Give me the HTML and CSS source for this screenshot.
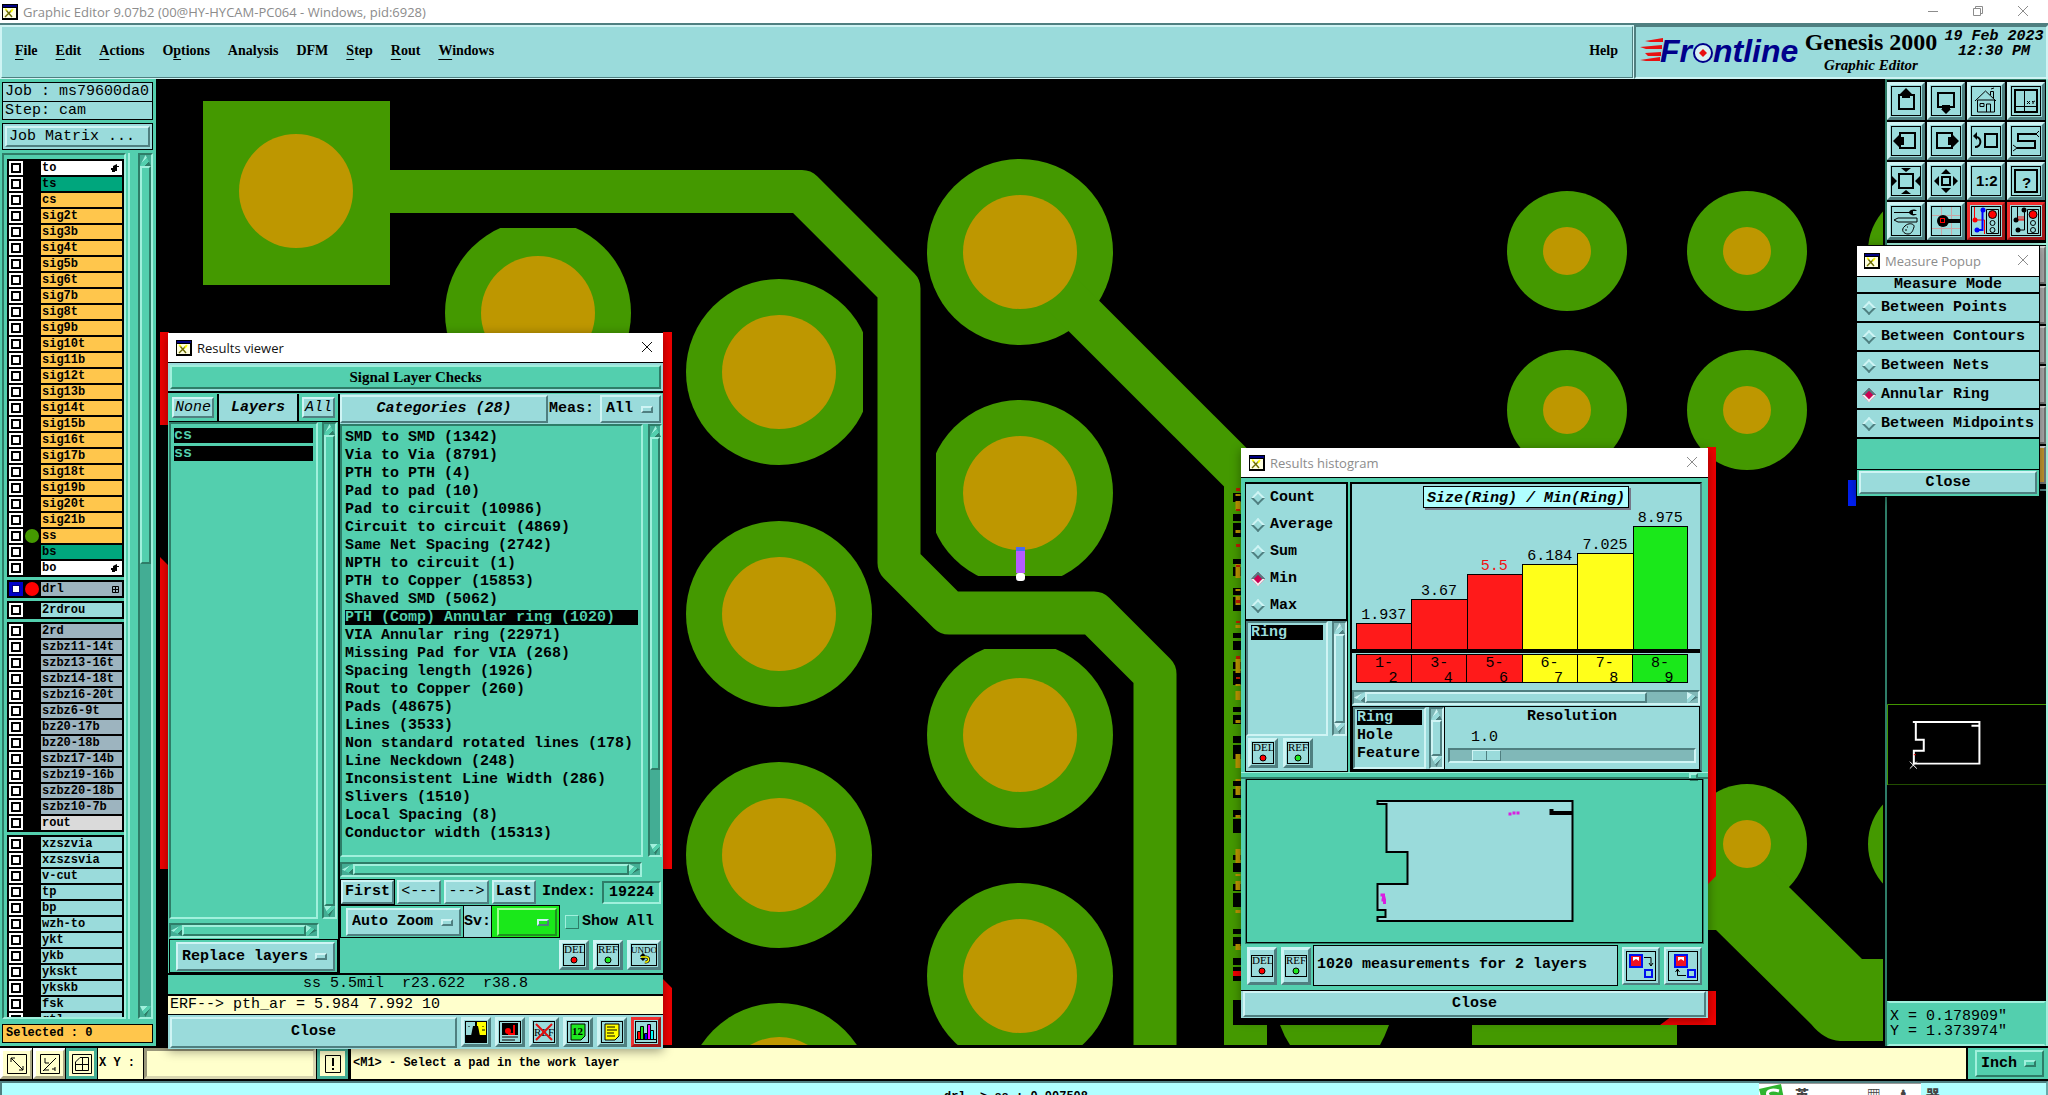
FILE: index.html
```html
<!DOCTYPE html>
<html lang="en">
<head>
<meta charset="utf-8">
<title>Graphic Editor 9.07b2</title>
<link rel="stylesheet" href="styles.css">
</head>
<body>
<svg class="defs" aria-hidden="true">
  <symbol id="app" viewBox="0 0 16 16"><rect width="16" height="16" fill="#000"/><rect x="1" y="1" width="14" height="2" fill="#000080"/><rect x="1" y="4" width="13" height="10" fill="#ffffe0"/><path d="M4 6l6 7M10 6l-7 7" stroke="#6b6b00" stroke-width="1.4"/><path d="M3 5l2 1M11 5l-2 3" stroke="#ff0" stroke-width="1.5"/></symbol>
  <symbol id="x" viewBox="0 0 12 12"><path d="M1 1l10 10M11 1L1 11" stroke="currentColor" fill="none"/></symbol>
  <symbol id="hand" viewBox="0 0 8 8"><path d="M0 4h2V2l4-2v2h2v1H6v4H4v1H1V6H0z"/></symbol>
</svg>

<header class="titlebar">
  <svg class="app"><use href="#app"/></svg>
  <h1>Graphic Editor 9.07b2 (00@HY-HYCAM-PC064 - Windows, pid:6928)</h1>
  <button aria-label="Minimize"><svg viewBox="0 0 12 12"><path d="M1 6.500h10" stroke="currentColor"/></svg></button>
  <button aria-label="Restore"><svg viewBox="0 0 12 12"><path d="M1.500 3.500h7v7h-7zM3.500 3V1.500h7v7H9" fill="none" stroke="currentColor"/></svg></button>
  <button aria-label="Close"><svg><use href="#x"/></svg></button>
</header>

<div class="top">
  <nav class="menu">
    <button><u>F</u>ile</button><button><u>E</u>dit</button><button><u>A</u>ctions</button><button>O<u>p</u>tions</button><button>Analysis</button><button>DFM</button><button><u>S</u>tep</button><button><u>R</u>out</button><button><u>W</u>indows</button>
    <button class="help">Help</button>
  </nav>
  <div class="brand">
    <svg class="logo" viewBox="0 0 160 30"><g fill="#e81010"><path d="M5 4l18-3v4H10zM0 10l22-2v4H6zM5 16l16-1v4H8zM0 23l20-3v4H6z"/></g><text x="20" y="25" class="logotext">Fr</text><text x="73" y="25" class="logotext">ntline</text><circle cx="63" cy="16" r="9" fill="#d8f2f2" stroke="#00008b" stroke-width="2"/><path d="M63 12l4 4-4 4-4-4z" fill="#e81010"/></svg>
    <div class="product"><strong>Genesis 2000</strong><em>Graphic Editor</em></div>
    <div class="clock">19 Feb 2023<br>12:30 PM</div>
  </div>
</div>

<main class="main">
  <aside class="left">
    <div class="job"><div>Job : ms79600da0</div><div>Step: cam</div></div>
    <div class="matrix"><button class="raised">Job Matrix ...</button></div>
    <div class="listwrap">
      <div class="layers">
        <div class="grp">
          <label class="w"><input type="checkbox"><i></i><b>to</b><svg><use href="#hand"/></svg></label>
          <label class="g"><input type="checkbox"><i></i><b>ts</b></label>
          <label class="o"><input type="checkbox"><i></i><b>cs</b></label>
          <label class="o"><input type="checkbox"><i></i><b>sig2t</b></label>
          <label class="o"><input type="checkbox"><i></i><b>sig3b</b></label>
          <label class="o"><input type="checkbox"><i></i><b>sig4t</b></label>
          <label class="o"><input type="checkbox"><i></i><b>sig5b</b></label>
          <label class="o"><input type="checkbox"><i></i><b>sig6t</b></label>
          <label class="o"><input type="checkbox"><i></i><b>sig7b</b></label>
          <label class="o"><input type="checkbox"><i></i><b>sig8t</b></label>
          <label class="o"><input type="checkbox"><i></i><b>sig9b</b></label>
          <label class="o"><input type="checkbox"><i></i><b>sig10t</b></label>
          <label class="o"><input type="checkbox"><i></i><b>sig11b</b></label>
          <label class="o"><input type="checkbox"><i></i><b>sig12t</b></label>
          <label class="o"><input type="checkbox"><i></i><b>sig13b</b></label>
          <label class="o"><input type="checkbox"><i></i><b>sig14t</b></label>
          <label class="o"><input type="checkbox"><i></i><b>sig15b</b></label>
          <label class="o"><input type="checkbox"><i></i><b>sig16t</b></label>
          <label class="o"><input type="checkbox"><i></i><b>sig17b</b></label>
          <label class="o"><input type="checkbox"><i></i><b>sig18t</b></label>
          <label class="o"><input type="checkbox"><i></i><b>sig19b</b></label>
          <label class="o"><input type="checkbox"><i></i><b>sig20t</b></label>
          <label class="o"><input type="checkbox"><i></i><b>sig21b</b></label>
          <label class="o"><input type="checkbox"><i class="green"></i><b>ss</b></label>
          <label class="g"><input type="checkbox"><i></i><b>bs</b></label>
          <label class="w"><input type="checkbox"><i></i><b>bo</b><svg><use href="#hand"/></svg></label>
        </div>
        <div class="grp"><label class="y"><input type="checkbox" checked><i class="red"></i><b>drl</b><svg viewBox="0 0 8 8"><path d="M1.500 1.500h6v6h-6zM4.500 1v7M1 4.500h7" stroke="#000" fill="none"/></svg></label></div>
        <div class="grp"><label class="c"><input type="checkbox"><i></i><b>2rdrou</b></label></div>
        <div class="grp">
          <label class="y"><input type="checkbox"><i></i><b>2rd</b></label>
          <label class="y"><input type="checkbox"><i></i><b>szbz11-14t</b></label>
          <label class="y"><input type="checkbox"><i></i><b>szbz13-16t</b></label>
          <label class="y"><input type="checkbox"><i></i><b>szbz14-18t</b></label>
          <label class="y"><input type="checkbox"><i></i><b>szbz16-20t</b></label>
          <label class="y"><input type="checkbox"><i></i><b>szbz6-9t</b></label>
          <label class="y"><input type="checkbox"><i></i><b>bz20-17b</b></label>
          <label class="y"><input type="checkbox"><i></i><b>bz20-18b</b></label>
          <label class="y"><input type="checkbox"><i></i><b>szbz17-14b</b></label>
          <label class="y"><input type="checkbox"><i></i><b>szbz19-16b</b></label>
          <label class="y"><input type="checkbox"><i></i><b>szbz20-18b</b></label>
          <label class="y"><input type="checkbox"><i></i><b>szbz10-7b</b></label>
          <label class="l"><input type="checkbox"><i></i><b>rout</b></label>
        </div>
        <div class="grp">
          <label class="c"><input type="checkbox"><i></i><b>xzszvia</b></label>
          <label class="c"><input type="checkbox"><i></i><b>xzszsvia</b></label>
          <label class="c"><input type="checkbox"><i></i><b>v-cut</b></label>
          <label class="c"><input type="checkbox"><i></i><b>tp</b></label>
          <label class="c"><input type="checkbox"><i></i><b>bp</b></label>
          <label class="c"><input type="checkbox"><i></i><b>wzh-to</b></label>
          <label class="c"><input type="checkbox"><i></i><b>ykt</b></label>
          <label class="c"><input type="checkbox"><i></i><b>ykb</b></label>
          <label class="c"><input type="checkbox"><i></i><b>ykskt</b></label>
          <label class="c"><input type="checkbox"><i></i><b>ykskb</b></label>
          <label class="c"><input type="checkbox"><i></i><b>fsk</b></label>
          <label class="c"><input type="checkbox"><i></i><b>gtl</b></label>
        </div>
      </div>
      <div class="rail"></div>
      <div class="sb v layerbar"><span class="up"></span><span class="thumb"></span><span class="trough"></span><span class="down"></span></div>
    </div>
    <div class="selected">Selected : 0</div>
  </aside>

  <svg class="canvas" viewBox="156 79 1729 967" preserveAspectRatio="xMinYMin slice">
    <g fill="#449900">
      <rect x="203" y="101" width="187" height="184"/>
      <circle cx="538" cy="313" r="93"/>
      <circle cx="779" cy="372" r="93"/><circle cx="779" cy="614" r="93"/><circle cx="779" cy="855" r="93"/><circle cx="779" cy="1096" r="93"/>
      <circle cx="1020" cy="252" r="93"/><circle cx="1020" cy="493" r="93"/><circle cx="1020" cy="735" r="93"/><circle cx="1020" cy="976" r="93"/>
      <circle cx="1567" cy="251" r="60"/><circle cx="1747" cy="251" r="60"/><circle cx="1928" cy="251" r="60"/>
      <circle cx="1567" cy="410" r="60"/><circle cx="1747" cy="410" r="60"/><circle cx="1747" cy="844" r="60"/><circle cx="1928" cy="844" r="60"/>
      <path d="M1700 860V930H1716L1811 1024Q1824 1040 1840 1041H1883V959H1862L1790 888 1740 840z"/>
      <rect x="1224" y="480" width="9" height="566"/><rect x="1224" y="1025" width="43" height="20"/><rect x="1472" y="1025" width="205" height="20"/>
      <path d="M1280 1025H1389Q1385 1036 1380 1045H1290Q1284 1036 1280 1025z"/>
    </g>
    <g fill="none" stroke="#449900" stroke-width="43" stroke-linejoin="round">
      <path d="M385 191.500H802L899 288.500V563L949 613H1094L1155 674V1045"/>
      <path d="M1020 252L1260 492"/>
    </g>
    <g fill="#000">
      <rect x="440" y="215" width="200" height="13"/><rect x="863" y="300" width="14" height="145"/>
      <rect x="923" y="440" width="13" height="100"/><rect x="970" y="576" width="100" height="14"/><rect x="970" y="638" width="100" height="11"/>
      <rect x="1233" y="490" width="8" height="534"/><rect x="156" y="1045" width="1729" height="4"/><rect x="1883" y="79" width="2" height="967"/>
    </g>
    <g fill="#be9700">
      <circle cx="296" cy="191" r="57"/><circle cx="538" cy="313" r="57"/>
      <circle cx="779" cy="372" r="57"/><circle cx="779" cy="614" r="57"/><circle cx="779" cy="855" r="57"/><path d="M750 1045a57 57 0 0 1 58 0z"/>
      <circle cx="1020" cy="252" r="57"/><circle cx="1020" cy="493" r="57"/><circle cx="1020" cy="735" r="57"/><circle cx="1020" cy="976" r="57"/>
      <circle cx="1567" cy="251" r="24"/><circle cx="1747" cy="251" r="24"/><circle cx="1567" cy="410" r="24"/><circle cx="1747" cy="410" r="24"/><circle cx="1747" cy="844" r="24"/>
    </g>
    <g stroke-width="8" fill="none">
      <path d="M1237 490V1000" stroke="#449900" stroke-dasharray="3 9 12 7 2 14 22 5"/>
      <path d="M1238 494V950" stroke="#be9700" stroke-width="5" stroke-dasharray="2 5 9 20 3 31 14 11"/>
      <path d="M1238 488V700" stroke="#c02000" stroke-width="4" stroke-dasharray="3 18 2 33"/>
      <path d="M1237 971v5" stroke="#f00000"/>
    </g>
    <path fill="#f00000" d="M160 332h9V425h-9zM160 557l9 9V869h-9zM663 332h9V869h-9zM663 979l9 9V1045h-9zM1418 447H1716V876l-9 9V447zM1716 991V1025H1660l12-9h36V991z"/>
    <rect x="1848" y="480" width="8" height="26" fill="#0020f0"/>
    <rect x="1016" y="547" width="9" height="6" fill="#4a6af0"/><rect x="1016" y="551" width="9" height="22" fill="#b45cff"/><rect x="1016" y="573" width="9" height="8" rx="3" fill="#fff"/>
  </svg>

  <aside class="right">
    <div class="tools">
      <button aria-label="Pan up"><svg viewBox="0 0 30 30"><rect class="f" x=".5" y=".5" width="29" height="29"/><path class="s" d="M8 9h15v14H8z"/><path d="M15 2l6 6h-2v4h-8V8H9z"/></svg></button>
      <button aria-label="Pan down"><svg viewBox="0 0 30 30"><rect class="f" x=".5" y=".5" width="29" height="29"/><path class="s" d="M7 7h16v14H7z"/><path d="M15 28l5-5h-1v-4h-8v4h-1z"/></svg></button>
      <button aria-label="Home"><svg viewBox="0 0 30 30"><rect class="f" x=".5" y=".5" width="29" height="29"/><path class="t" d="M4 15L14.500 5 25 15M6.500 14v12h17V14zM9 17.500h4v3H9zM15.500 26v-8h4v8M19.500 9V5.500h3V12M20 3l3-1"/></svg></button>
      <button aria-label="Coordinates"><svg viewBox="0 0 30 30"><rect class="f" x=".5" y=".5" width="29" height="29"/><path class="s" d="M4 4h22v22H4z"/><path class="t" d="M13.500 4v22M4 20.500h22M16 15l3 3m0-3l-3 3M21 15l1 1 2-1m-2 1v2"/></svg></button>
      <button aria-label="Pan left"><svg viewBox="0 0 30 30"><rect class="f" x=".5" y=".5" width="29" height="29"/><path class="s" d="M9 7h15v15H9z"/><path d="M2 15l6-6v2h5v8H8v2z"/></svg></button>
      <button aria-label="Pan right"><svg viewBox="0 0 30 30"><rect class="f" x=".5" y=".5" width="29" height="29"/><path class="s" d="M6 7h15v15H6z"/><path d="M28 15l-6-6v2h-5v8h5v2z"/></svg></button>
      <button aria-label="Previous view"><svg viewBox="0 0 30 30"><rect class="f" x=".5" y=".5" width="29" height="29"/><path class="s" d="M14 8h12v13H14zM4 21c7 0 7-10 1-10"/><path d="M2 10l4-4v8z"/></svg></button>
      <button aria-label="Snake"><svg viewBox="0 0 30 30"><rect class="f" x=".5" y=".5" width="29" height="29"/><path class="s" d="M25 8H7v7h17v7H6"/><path class="t" d="M25 8l3-3m-3 3l3 3M6 22l-4-3m4 3l-4 3"/></svg></button>
      <button aria-label="Zoom in"><svg viewBox="0 0 30 30"><rect class="f" x=".5" y=".5" width="29" height="29"/><path class="s" d="M8 8h14v14H8z"/><path d="M15 6l-5-4h10zM15 24l-5 4h10zM6 15l-5-5v10zM24 15l5-5v10z"/></svg></button>
      <button aria-label="Zoom out"><svg viewBox="0 0 30 30"><rect class="f" x=".5" y=".5" width="29" height="29"/><path class="s" d="M11 11h8v8h-8z"/><path d="M15 3l5 5H10zM15 27l5-5H10zM3 15l5-5v10zM27 15l-5-5v10z"/></svg></button>
      <button aria-label="Scale one to two"><svg viewBox="0 0 30 30"><rect class="f" x=".5" y=".5" width="29" height="29"/><text x="5" y="20" class="big">1:2</text></svg></button>
      <button aria-label="Query"><svg viewBox="0 0 30 30"><rect class="f" x=".5" y=".5" width="29" height="29"/><path class="s" d="M4 4h22v22H4z"/><text x="11" y="22" class="big">?</text></svg></button>
      <button aria-label="Settings"><svg viewBox="0 0 30 30"><rect class="f" x=".5" y=".5" width="29" height="29"/><path d="M3 6h15c2-3 6-3 8-1h-4v3h4c-2 2-6 2-8-1H3z"/><path class="t" d="M3 14l4-2h19v4H7zM14 20c4-4 10-2 9 1s-2 7-6 7-8-4-3-8zM14 24h2m0-3h1"/></svg></button>
      <button aria-label="Highlight net"><svg viewBox="0 0 30 30"><rect class="f" x=".5" y=".5" width="29" height="29"/><path d="M10.500 1v28M20.500 1v28M1 9.500h28M1 22.500h28" stroke="#c9a5a5"/><circle cx="12" cy="15" r="6"/><path d="M15 13h14v4H15z"/><rect x="9.500" y="12.500" width="4" height="4" stroke="#f00" fill="none"/></svg></button>
      <button class="on" aria-label="Net status"><svg viewBox="0 0 30 30"><rect class="f" x=".5" y=".5" width="29" height="29"/><path d="M3.500 1v13h10v14" stroke="#f00" fill="none"/><path d="M11.500 4v20H5" stroke="#00f" stroke-width="2" fill="none"/><circle cx="12" cy="4" r="2.500" fill="#00f"/><circle cx="6" cy="24" r="2.500" fill="#00f"/><circle cx="4" cy="14" r="2.500" fill="#f00"/><path class="t" d="M15.500 3.500h12v24h-12z"/><circle cx="21.500" cy="8.500" r="4" fill="#f00" stroke="#000"/><circle class="t" cx="21.500" cy="17" r="2.500"/><circle class="t" cx="21.500" cy="24" r="2.500"/></svg></button>
      <button class="on" aria-label="Selection status"><svg viewBox="0 0 30 30"><rect class="f" x=".5" y=".5" width="29" height="29"/><path class="t" d="M6.500 1v13M13.500 4v20H7"/><path d="M7 14h6M8 10v4m2-4v4m2-4v4" stroke="#f00"/><circle cx="13" cy="4" r="2.500"/><circle cx="7" cy="24" r="2.500"/><circle cx="5" cy="14" r="2.500"/><path class="t" d="M16.500 3.500h11v24h-11z"/><circle cx="22" cy="8.500" r="4" fill="#f00" stroke="#000"/><circle class="t" cx="22" cy="17" r="2.500"/><circle class="t" cx="22" cy="24" r="2.500"/></svg></button>
    </div>
    <div class="more"><span></span><span></span><span></span><span></span><span></span><span class="amber"></span></div>
    <div class="overview">
      <svg viewBox="0 0 160 82"><path d="M161 .5H.5v81H161" fill="none" stroke="#449900"/><path d="M26 18h67v42H27V47h10V36h-8V18M85 22h8" fill="none" stroke="#fff" stroke-width="2"/><path d="M23 58l7 7m0-7l-7 7" stroke="#fff"/><path d="M27 51h2" stroke="#f00"/></svg>
    </div>
    <div class="coords">X = 0.178909"<br>Y = 1.373974"</div>
  </aside>
</main>

<footer class="cmd">
  <button aria-label="Diagonal snap"><svg viewBox="0 0 20 20"><path class="t" d="M.5 .5h19v19H.5zM4 4l12 12M4 8V4h4M16 12v4h-4"/></svg></button>
  <button aria-label="Angle snap"><svg viewBox="0 0 20 20"><path class="t" d="M.5 .5h19v19H.5zM4 16h5M3 17L16 4M5 4v5h4M12 15h3m0-2v4"/></svg></button>
  <button class="teal" aria-label="Grid"><svg viewBox="0 0 20 20"><path class="t" d="M.5 .5h19v19H.5zM8 3.500h8.500v13h-13V8zM10.500 3v13M3 10.500h14"/></svg></button>
  <label for="xy">X Y :</label>
  <input id="xy" type="text">
  <button class="teal" aria-label="Alert"><svg viewBox="0 0 20 20"><path class="t" d="M2.500 1.500h15v17h-15z"/><path class="s" d="M10 4v8M10 14v2"/></svg></button>
  <p>&lt;M1&gt; - Select a pad in the work layer</p>
  <div class="unit"><div class="raised dd tealbtn"><select aria-label="Unit"><option>Inch</option><option>mm</option></select><i class="dash"></i></div></div>
</footer>
<div class="status"><span>drl -&gt; ss : 0.007508</span>
  <div class="ime"><svg viewBox="0 0 26 20"><path d="M0 5L22 0l4 20H4z" fill="#2fb52f"/><path d="M20 7C10 4 6 9 10 12s10 2 10 8" fill="none" stroke="#fff" stroke-width="3"/></svg><b>英</b><b>,</b><b>,</b><b>▦</b><b>♟</b><b>器</b></div>
</div>

<section class="win viewer">
  <div class="wtitle active"><svg class="app"><use href="#app"/></svg><h2>Results viewer</h2><button aria-label="Close"><svg><use href="#x"/></svg></button></div>
  <div class="banner"><h3>Signal Layer Checks</h3></div>
  <div class="cols">
    <div class="colA">
      <div class="tabs"><button class="raised thin">None</button><strong>Layers</strong><button class="raised thin">All</button></div>
      <div class="scroll">
        <ul class="list short"><li class="sel">cs</li><li class="sel">ss</li></ul>
        <div class="sb v"><span class="up"></span><span class="thumb"></span><span class="down"></span></div>
      </div>
      <div class="sb h"><span class="lt"></span><span class="thumb"></span><span class="rt"></span></div>
      <div class="replace"><div class="raised dd"><select aria-label="Layer mode"><option>Replace layers</option><option>Add layers</option></select><i class="dash"></i></div></div>
    </div>
    <div class="colB">
      <div class="cathead"><button class="raised cat">Categories (28)</button><label for="meas">Meas:</label><div class="raised dd meas"><select id="meas"><option>All</option></select><i class="dash"></i></div></div>
      <div class="scroll">
        <ul class="list">
          <li>SMD to SMD (1342)</li><li>Via to Via (8791)</li><li>PTH to PTH (4)</li><li>Pad to pad (10)</li><li>Pad to circuit (10986)</li><li>Circuit to circuit (4869)</li><li>Same Net Spacing (2742)</li><li>NPTH to circuit (1)</li><li>PTH to Copper (15853)</li><li>Shaved SMD (5062)</li><li class="sel">PTH (Comp) Annular ring (1020)</li><li>VIA Annular ring (22971)</li><li>Missing Pad for VIA (268)</li><li>Spacing length (1926)</li><li>Rout to Copper (260)</li><li>Pads (48675)</li><li>Lines (3533)</li><li>Non standard rotated lines (178)</li><li>Line Neckdown (248)</li><li>Inconsistent Line Width (286)</li><li>Slivers (1510)</li><li>Local Spacing (8)</li><li>Conductor width (15313)</li>
        </ul>
        <div class="sb v catbar"><span class="up"></span><span class="thumb"></span><span class="trough"></span><span class="down"></span></div>
      </div>
      <div class="sb h"><span class="lt"></span><span class="thumb"></span><span class="rt"></span></div>
      <div class="nav"><button class="raised first">First</button><button class="raised light">&lt;---</button><button class="raised light">---&gt;</button><button class="raised">Last</button><label for="idx">Index:</label><input id="idx" type="text" value="19224"></div>
      <div class="opts"><div class="auto"><div class="raised dd"><select aria-label="Zoom mode"><option>Auto Zoom</option><option>No Zoom</option></select><i class="dash"></i></div></div><label class="sv" for="sv">Sv:</label><div class="svbox"><div class="raised dd"><select id="sv"><option></option></select><i class="dash"></i></div></div><label class="show"><input type="checkbox">Show All</label></div>
      <div class="acts">
        <button class="raised ic" aria-label="Delete"><svg viewBox="0 0 22 22"><rect x=".5" y=".5" width="21" height="21" fill="none" stroke="#000"/><text x="1" y="9" class="cap">DEL</text><circle cx="11" cy="16" r="3" fill="#f00" stroke="#000"/></svg></button>
        <button class="raised ic" aria-label="Reference"><svg viewBox="0 0 22 22"><rect x=".5" y=".5" width="21" height="21" fill="none" stroke="#000"/><text x="1" y="9" class="cap">REF</text><circle cx="11" cy="16" r="3" fill="#1fe81f" stroke="#000"/></svg></button>
        <button class="raised ic wide" aria-label="Undo"><svg viewBox="0 0 26 22"><rect x=".5" y=".5" width="25" height="21" fill="none" stroke="#000"/><text x="0" y="9" class="cap sm">UNDO</text><path d="M10 13h5c4 0 3 6-1 5M10 13l3-3M10 13l3 3" fill="none" stroke="#000" stroke-width="3"/><path d="M10 13h5c4 0 3 6-1 5" fill="none" stroke="#ff0" stroke-width="1.5"/></svg></button>
      </div>
    </div>
  </div>
  <div class="info">ss 5.5mil&nbsp; r23.622&nbsp; r38.8</div>
  <div class="erf">ERF--&gt; pth_ar = 5.984 7.992 10</div>
  <div class="closebar"><button class="raised close">Close</button>
    <button class="raised ic" aria-label="Compare"><svg viewBox="0 0 22 22"><rect width="22" height="22"/><rect x="1" y="1" width="9" height="13" fill="#9adbdb"/><rect x="12" y="1" width="9" height="13" fill="#ff0"/><path d="M8 5h5l2 10H6z"/><path d="M4 5v1M18 5v1M17 9h3" stroke="#000"/></svg></button>
    <button class="raised ic" aria-label="Snapshot"><svg viewBox="0 0 22 22"><rect class="f" x=".5" y=".5" width="21" height="21"/><rect x="3" y="2" width="16" height="12"/><circle cx="9" cy="10" r="3" fill="#f00"/><path d="M15 4v10M9 13h6" stroke="#f00" stroke-width="2"/><path d="M3 16h16M3 19h13" stroke="#000"/></svg></button>
    <button class="raised ic" aria-label="Clear reference"><svg viewBox="0 0 22 22"><rect class="f" x=".5" y=".5" width="21" height="21"/><text x="1" y="15" class="cap">REF</text><path d="M3 3l16 16M19 3L3 19" stroke="#e01010" stroke-width="2"/></svg></button>
    <button class="raised ic" aria-label="Renumber"><svg viewBox="0 0 22 22"><rect class="f" x=".5" y=".5" width="21" height="21"/><path d="M4 3h14v12l-4 4H4z" fill="#1fe81f" stroke="#000"/><text x="5" y="14" class="cap num">12</text></svg></button>
    <button class="raised ic" aria-label="Notes"><svg viewBox="0 0 22 22"><rect class="f" x=".5" y=".5" width="21" height="21"/><path d="M4 3h14v12l-4 4H4z" fill="#ff0" stroke="#000"/><path d="M6 6h8M6 9h10M6 12h7M6 15h8" stroke="#000"/></svg></button>
    <button class="raised ic on" aria-label="Histogram"><svg viewBox="0 0 22 22"><rect class="f" x=".5" y=".5" width="21" height="21"/><g stroke="#000"><path d="M2.500 10.500h3v8h-3z" fill="#f00"/><path d="M5.500 5.500h3v13h-3z" fill="#1fe81f"/><path d="M9.500 12.500h3v6h-3z" fill="#00f"/><path d="M12.500 3.500h3v15h-3z" fill="#f0f"/><path d="M15.500 9.500h3v9h-3z" fill="#0ff"/><path d="M1 18.500h20"/></g></svg></button>
  </div>
</section>

<section class="win histo">
  <div class="wtitle"><svg class="app"><use href="#app"/></svg><h2>Results histogram</h2><button aria-label="Close"><svg><use href="#x"/></svg></button></div>
  <div class="hbody">
    <div class="hleft">
      <div class="radios">
        <label><input type="radio" name="stat">Count</label><label><input type="radio" name="stat">Average</label><label><input type="radio" name="stat">Sum</label><label><input type="radio" name="stat" checked>Min</label><label><input type="radio" name="stat">Max</label>
      </div>
      <div class="scroll">
        <ul class="list"><li class="sel">Ring</li></ul>
        <div class="sb v"><span class="up"></span><span class="thumb"></span><span class="down"></span></div>
      </div>
      <div class="acts">
        <button class="raised ic" aria-label="Delete"><svg viewBox="0 0 22 22"><rect x=".5" y=".5" width="21" height="21" fill="none" stroke="#000"/><text x="1" y="9" class="cap">DEL</text><circle cx="11" cy="16" r="3" fill="#f00" stroke="#000"/></svg></button>
        <button class="raised ic" aria-label="Reference"><svg viewBox="0 0 22 22"><rect x=".5" y=".5" width="21" height="21" fill="none" stroke="#000"/><text x="1" y="9" class="cap">REF</text><circle cx="11" cy="16" r="3" fill="#1fe81f" stroke="#000"/></svg></button>
      </div>
    </div>
    <div class="hright">
      <h3 class="ctitle">Size(Ring) / Min(Ring)</h3>
      <div class="bars">
        <div><span>1.937</span><i class="r" style="height:26px"></i></div><div><span>3.67</span><i class="r" style="height:50px"></i></div><div><span class="hot">5.5</span><i class="r" style="height:75px"></i></div><div><span>6.184</span><i class="yl" style="height:85px"></i></div><div><span>7.025</span><i class="yl" style="height:96px"></i></div><div><span>8.975</span><i class="gr" style="height:123px"></i></div>
      </div>
      <div class="axis"><span class="r">1-<br>&nbsp; 2</span><span class="r">3-<br>&nbsp; 4</span><span class="r">5-<br>&nbsp; 6</span><span class="yl">6-<br>&nbsp; 7</span><span class="yl">7-<br>&nbsp; 8</span><span class="gr">8-<br>&nbsp; 9</span></div>
      <div class="sb h chartbar"><span class="lt"></span><span class="thumb"></span><span class="trough"></span><span class="rt"></span></div>
      <div class="hbot">
        <ul class="list"><li class="sel">Ring</li><li>Hole</li><li>Feature</li></ul>
        <div class="sb v"><span class="up"></span><span class="thumb"></span><span class="down"></span></div>
        <div class="res"><label for="res">Resolution</label><output>1.0</output><input id="res" type="range" min="0" max="10" value="1"></div>
      </div>
    </div>
  </div>
  <div class="sash"><i></i></div>
  <div class="map"><svg viewBox="0 0 454 162"><path d="M130 21H325V141H130V137H138V130H130V104H160V72H139V24H130z" fill="#9adbdb" stroke="#000" stroke-width="2"/><path d="M325 33H304V29" fill="none" stroke="#000" stroke-width="4"/><path d="M261 34h3m1-1h3m1 0h3M133 115h3v3h2m-4 2h3v4" stroke="#d81fe0" stroke-width="3" fill="none"/></svg></div>
  <div class="hfoot">
    <button class="raised ic" aria-label="Delete"><svg viewBox="0 0 22 22"><rect x=".5" y=".5" width="21" height="21" fill="none" stroke="#000"/><text x="1" y="9" class="cap">DEL</text><circle cx="11" cy="16" r="3" fill="#f00" stroke="#000"/></svg></button>
    <button class="raised ic" aria-label="Reference"><svg viewBox="0 0 22 22"><rect x=".5" y=".5" width="21" height="21" fill="none" stroke="#000"/><text x="1" y="9" class="cap">REF</text><circle cx="11" cy="16" r="3" fill="#1fe81f" stroke="#000"/></svg></button>
    <p>1020 measurements for 2 layers</p>
    <button class="raised ic sq" aria-label="Copy to"><svg viewBox="0 0 30 30"><rect class="f" x=".5" y=".5" width="29" height="29"/><rect x="4" y="4" width="12" height="12" fill="#f01020" stroke="#0010f0" stroke-width="2"/><path d="M7 6v4l3-2 3 2V6z" fill="#fff"/><path class="t" d="M18 6.500h7V15m-2-3l2 3 2-3"/><rect x="19" y="19" width="7" height="7" fill="none" stroke="#0010f0" stroke-width="2"/></svg></button>
    <button class="raised ic sq" aria-label="Copy from"><svg viewBox="0 0 30 30"><rect class="f" x=".5" y=".5" width="29" height="29"/><rect x="7" y="4" width="12" height="12" fill="#f01020" stroke="#0010f0" stroke-width="2"/><path d="M10 6v4l3-2 3 2V6z" fill="#fff"/><path class="t" d="M18 24.500H9.500V18m-2 3l2-3 2 3"/><rect x="20" y="19" width="7" height="7" fill="none" stroke="#0010f0" stroke-width="2"/></svg></button>
  </div>
  <div class="closebar"><button class="raised close">Close</button></div>
</section>

<section class="win measure">
  <div class="wtitle"><svg class="app"><use href="#app"/></svg><h2>Measure Popup</h2><button aria-label="Close"><svg><use href="#x"/></svg></button></div>
  <h3>Measure Mode</h3>
  <div class="modes">
    <label><input type="radio" name="mode">Between Points</label><label><input type="radio" name="mode">Between Contours</label><label><input type="radio" name="mode">Between Nets</label><label><input type="radio" name="mode" checked>Annular Ring</label><label><input type="radio" name="mode">Between Midpoints</label>
  </div>
  <div class="mclose"><button class="raised">Close</button></div>
</section>
</body>
</html>
```
FILE: styles.css
```css
:root {
  --panel: #9adbdb;
  --lite: #cff4f4;
  --dark: #4f7f80;
  --teal: #53cfae;
  --tlite: #a0f0dc;
  --tdark: #2e7d68;
  --trough: #43ad94;
  --cream: #ffffcc;
  --red: #ff1a1a;
  --yellow: #ffff1a;
  --green: #1ae81a;
}
* { box-sizing: border-box; }
body {
  margin: 0;
  height: 100vh;
  overflow: hidden;
  display: flex;
  flex-direction: column;
  background: #000;
  color: #000;
  font: bold 15px/18px "Liberation Mono", monospace;
}
h1, h2, h3, p, ul { margin: 0; padding: 0; font: inherit; }
ul { list-style: none; }
button, input, select { font: inherit; color: inherit; margin: 0; padding: 0; border-radius: 0; }
button { border: 0; background: none; white-space: nowrap; }
.defs { position: absolute; width: 0; height: 0; }
.f, .t { fill: none; stroke: #000; }
.s { fill: none; stroke: #000; stroke-width: 2; }
.cap { font: 11px "Liberation Serif", serif; }
.cap.sm { font-size: 9px; }
.cap.num { font-weight: bold; }
.big { font: bold 15px "Liberation Sans", sans-serif; }
.app { width: 16px; height: 16px; flex: none; }

.raised {
  background: var(--panel);
  border: 3px solid;
  border-color: var(--lite) var(--dark) var(--dark) var(--lite);
}
.dash {
  display: inline-block;
  flex: none;
  width: 12px;
  height: 7px;
  border: 2px solid;
  border-color: var(--lite) var(--dark) var(--dark) var(--lite);
}
.dd { display: flex; align-items: center; padding: 0 6px 0 4px; border-width: 2px; }
.dd select { appearance: none; flex: 1; min-width: 0; border: 0; background: none; }

/* title bar */
.titlebar { display: flex; align-items: center; height: 23px; flex: none; background: #fff; color: #8c8c8c; padding-left: 2px; font: 13px/20px "Open Sans", sans-serif; }
.titlebar h1 { flex: 1; padding-left: 5px; }
.titlebar button { width: 45px; height: 20px; }
.titlebar button:last-child { margin-right: 3px; }
.titlebar button svg { width: 12px; height: 12px; }

.top { display: flex; height: 56px; flex: none; border-top: 2px solid var(--dark); }
.menu { flex: 1; display: flex; align-items: center; gap: 18px; padding: 0 14px 2px 13px; background: var(--panel); border: 2px solid; border-color: var(--lite) var(--dark) var(--dark) var(--lite); outline: 1px solid var(--lite); outline-offset: -1px; font: bold 14px/18px "Liberation Serif", serif; }
.menu u { text-underline-offset: 4px; }
.menu .help { margin-left: auto; }
.brand { width: 414px; display: flex; padding: 2px 0 0 4px; background: var(--panel); border: 2px solid; border-color: var(--dark) var(--lite) var(--lite) var(--dark); }
.logo { width: 160px; height: 30px; margin-top: 8px; flex: none; }
.logotext { font: italic bold 32px "Liberation Sans", sans-serif; fill: #00008b; }
.product { width: 142px; text-align: center; font-family: "Liberation Serif", serif; }
.product strong { display: block; font-size: 24px; line-height: 26px; }
.product em { font-size: 15px; line-height: 20px; }
.clock { flex: 1; text-align: center; font-style: italic; line-height: 15px; white-space: nowrap; }

.main { flex: 1; min-height: 0; display: flex; }

/* left column */
.left { width: 156px; flex: none; display: flex; flex-direction: column; background: var(--teal); padding: 3px 3px 3px 2px; }
.job, .matrix { border: 1px solid #000; background: var(--panel); font-weight: normal; }
.job div { padding: 0 2px; height: 18px; white-space: nowrap; }
.job div + div { border-top: 1px solid #000; }
.matrix { margin-top: 3px; padding: 2px; height: 27px; }
.matrix button { width: 100%; height: 21px; line-height: 15px; text-align: left; border-width: 2px; padding-left: 2px; }
.listwrap { flex: 1; min-height: 0; display: flex; margin-top: 3px; }
.layers { width: 124px; overflow: hidden; border: 2px solid; border-color: var(--tdark) var(--tlite) var(--tlite) var(--tdark); padding: 4px 0 0 3px; font: bold 12px/14px "Liberation Mono", monospace; }
.rail { width: 4px; border-right: 2px solid var(--tlite); margin-right: 8px; }
.grp { width: 117px; background: #000; padding: 1px 2px; margin-bottom: 3px; }
.grp label { display: flex; align-items: center; height: 16px; }
.grp input { appearance: none; width: 14px; height: 14px; background: #fff; box-shadow: inset 0 0 0 2px #fff, inset 0 0 0 4px #000; }
.grp input:checked { box-shadow: inset 0 0 0 3px #0000c8, inset 0 0 0 4px #000080; }
.grp i { width: 18px; height: 16px; flex: none; }
.grp i.green, .grp i.red { width: 14px; height: 14px; margin: 0 2px; border-radius: 50%; background: #449900; }
.grp i.red { background: #f00; }
.grp b { flex: 1; height: 14px; padding-left: 1px; background: var(--row); }
.grp svg { width: 11px; height: 14px; padding: 3px 3px 3px 0; background: var(--row); }
.w { --row: #fff; } .g { --row: #00a67d; } .o { --row: #ffc64c; } .y { --row: #9db4bf; } .c { --row: #9adbdb; } .l { --row: #dadada; }
.selected { margin-top: 5px; height: 19px; border: 1px solid #000; background: #ffc64c; font: bold 12px/17px "Liberation Mono", monospace; padding-left: 3px; }

/* scroll bars */
.sb { display: flex; background: var(--trough); border: 2px solid; border-color: var(--tdark) var(--tlite) var(--tlite) var(--tdark); flex: none; }
.sb.v { width: 15px; flex-direction: column; }
.sb.h { height: 15px; }
.sb .thumb { flex: 1; background: var(--teal); border: 2px solid; border-color: var(--tlite) var(--tdark) var(--tdark) var(--tlite); }
.up, .down, .lt, .rt { flex: none; width: 11px; height: 11px; }
.up { clip-path: polygon(50% 0, 100% 100%, 0 100%); }
.down { clip-path: polygon(50% 100%, 100% 0, 0 0); }
.lt { clip-path: polygon(0 50%, 100% 0, 100% 100%); }
.rt { clip-path: polygon(100% 50%, 0 0, 0 100%); }
.up, .lt { background: linear-gradient(135deg, var(--tlite) 45%, var(--teal) 45% 70%, var(--tdark) 70%); }
.down, .rt { background: linear-gradient(135deg, var(--tlite) 35%, var(--teal) 35% 55%, var(--tdark) 55%); }
.layerbar .thumb { flex: 396; } .layerbar .trough { flex: 444; }
.catbar .thumb { flex: 328; } .catbar .trough { flex: 74; }
.chartbar .thumb { flex: 281; } .chartbar .trough { flex: 41; }

.canvas { flex: 1; min-width: 0; height: 100%; }

/* right column */
.right { width: 163px; flex: none; display: flex; flex-direction: column; border-left: 2px solid var(--tdark); border-right: 2px solid var(--tlite); }
.tools { display: grid; grid-template-columns: repeat(4, 38px); gap: 2px; padding: 2px 0 3px; border-bottom: 2px solid var(--tlite); border-top: 1px solid var(--tdark); }
.tools button, .cmd > button { height: 38px; background: var(--panel); border: 3px solid; border-color: var(--lite) var(--dark) var(--dark) var(--lite); display: grid; place-items: center; }
.tools button.on, .raised.on { border-color: #f03030 #a01818 #a01818 #f03030; }
.tools svg { width: 30px; height: 30px; }
.more { display: grid; grid-template-columns: 38px; grid-auto-rows: 38px; gap: 2px; justify-content: end; height: 246px; padding: 1px 0; border-bottom: 2px solid var(--dark); }
.more span { background: #b0b0b0; border: 2px solid; border-color: #ddd #777 #777 #ddd; }
.more .amber { background: #c89a30; }
.overview { flex: 1; padding-top: 213px; }
.overview svg { display: block; width: 100%; }
.coords { height: 45px; background: var(--teal); border: 2px solid; border-color: var(--tlite) var(--teal) var(--tlite) var(--teal); padding: 6px 1px; line-height: 15px; font-weight: normal; }

/* command line */
.cmd { display: flex; height: 35px; flex: none; background: var(--cream); border-top: 2px solid #000; border-bottom: 2px solid #000; font: bold 12px/31px "Liberation Mono", monospace; }
.cmd > button { width: 33px; height: 31px; background: var(--cream); border-color: #fff #aaa884 #aaa884 #fff; outline: 1px solid #000; flex: none; }
.cmd > button.teal { width: 31px; border-color: var(--trough); }
.cmd svg { width: 20px; height: 20px; }
.cmd label { width: 47px; padding-left: 2px; white-space: pre; }
.cmd input { width: 172px; border: 3px solid; border-color: #99977a #d8d6b0 #d8d6b0 #99977a; background: var(--cream); outline: 1px solid #000; margin-right: 1px; }
.cmd p { flex: 1; border-left: 2px solid #000; margin-left: 1px; padding-left: 2px; }
.unit { width: 82px; background: var(--teal); border-left: 2px solid #000; padding: 2px 4px 2px 7px; }
.tealbtn { height: 27px; line-height: 20px; background: var(--teal); border-color: var(--tlite) var(--tdark) var(--tdark) var(--tlite); font-size: 15px; }
.tealbtn .dash { border-color: var(--tlite) var(--tdark) var(--tdark) var(--tlite); }
.status { height: 14px; flex: none; overflow: hidden; display: flex; background: #b0ffff; border: 2px solid; border-color: var(--dark) #6aa #6aa var(--dark); border-bottom: 0; text-align: center; position: relative; font: bold 12px/14px "Liberation Mono", monospace; }
.status > span { flex: 1; padding-top: 7px; padding-right: 16px; }
.ime { position: absolute; right: 125px; top: 0; width: 162px; display: flex; gap: 16px; border-top: 1px solid #999; background: #fff; font: bold 14px/20px "Noto Sans CJK SC", sans-serif; color: #444; }
.ime svg { width: 26px; height: 20px; flex: none; margin-right: -6px; }

/* floating windows */
.win { position: absolute; display: flex; flex-direction: column; background: var(--teal); box-shadow: 0 2px 10px rgba(0, 0, 0, .4); }
.wtitle { display: flex; align-items: center; height: 30px; flex: none; background: #fff; color: #8c8c8c; padding: 0 8px; font: 13px/20px "Open Sans", sans-serif; border-bottom: 1px solid #000; }
.wtitle.active { color: #111; }
.wtitle h2 { flex: 1; padding-left: 5px; }
.wtitle button { width: 16px; height: 20px; }
.wtitle button svg { width: 12px; height: 12px; }
.ic { width: 30px; height: 30px; display: grid; place-items: center; flex: none; }
.ic svg { width: 22px; height: 22px; }
.ic.wide { width: 34px; }
.ic.wide svg { width: 26px; }
.scroll { display: flex; flex: 1; min-height: 0; }
.list { flex: 1; border: 2px solid; border-color: var(--tdark) var(--tlite) var(--tlite) var(--tdark); }
.list li { height: 15px; line-height: 15px; margin-bottom: 3px; white-space: nowrap; }
.list .sel { background: #000; color: var(--teal); }
.closebar { display: flex; background: var(--panel); border-top: 1px solid #000; flex: none; }

.viewer { left: 168px; top: 333px; width: 495px; height: 716px; }
.banner { height: 30px; flex: none; padding: 2px; background: var(--panel); border-bottom: 2px solid #000; text-align: center; }
.banner h3 { height: 24px; font: bold 15px/20px "Liberation Serif", serif; background: var(--teal); border: 2px solid; border-color: var(--tlite) var(--tdark) var(--tdark) var(--tlite); }
.cols { flex: 1; min-height: 0; display: flex; padding: 1px 1px 0; }
.colA { width: 171px; display: flex; flex-direction: column; border-right: 2px solid #000; }
.tabs { display: flex; height: 28px; flex: none; border-bottom: 1px solid #000; font-style: italic; }
.tabs strong { flex: 1; line-height: 28px; text-align: center; background: var(--panel); border: solid #000; border-width: 0 2px; }
.tabs button { margin: 3px; padding: 0 1px; border-width: 2px; font-style: italic; font-weight: normal; }
.short li { margin-right: 3px; }
.colA .list, .colB .list { padding: 4px 3px 0; }
.colA .list { margin-right: 4px; padding-right: 0; }
.colB .list { margin-right: 5px; }
.colA .sb.v { margin-right: 1px; }
.colB .sb.v { width: 14px; }
.colA .sb.h { margin: 4px 19px 1px 0; }
.colB .sb.h { margin: 5px 20px 2px 0; }
.replace { height: 34px; flex: none; border: 1px solid #000; padding: 2px 2px 2px 6px; }
.replace .dd { height: 29px; }
.colB { flex: 1; display: flex; flex-direction: column; }
.cathead { display: flex; height: 30px; flex: none; background: var(--panel); align-items: center; }
.cat { width: 208px; height: 28px; border-width: 2px; font-style: italic; }
.cathead label { flex: 1; padding-left: 1px; }
.meas { width: 61px; height: 28px; margin-right: 1px; }
.nav { display: flex; gap: 3px; height: 26px; flex: none; align-items: center; padding: 0 1px; }
.nav button { height: 24px; line-height: 18px; border-width: 2px; padding: 0 2px; flex: 1; }
.nav .light { font-weight: normal; }
.nav .first { outline: 1px solid #000; flex: 1 0 8px; }
.nav label { padding: 0 3px; }
.nav input { width: 59px; height: 23px; background: var(--teal); border: 2px solid; border-color: var(--tdark) var(--tlite) var(--tlite) var(--tdark); padding-left: 5px; }
.opts { display: flex; height: 33px; flex: none; align-items: center; }
.auto, .svbox { border: 1px solid #000; height: 33px; padding: 2px 2px 2px 5px; }
.auto { width: 124px; }
.auto .dd, .svbox .dd { height: 28px; }
.sv { background: var(--panel); height: 31px; line-height: 31px; border: solid #000; border-width: 1px 0; box-sizing: content-box; }
.svbox { width: 69px; background: var(--green); }
.svbox .dd { background: var(--green); border-color: #a0ff90 #1f9020 #1f9020 #a0ff90; }
.show { display: flex; align-items: center; padding-left: 5px; gap: 3px; white-space: nowrap; }
.show input { appearance: none; width: 14px; height: 14px; border: 1px solid; border-color: var(--tlite) var(--tdark) var(--tdark) var(--tlite); }
.acts { display: flex; justify-content: flex-end; gap: 4px; padding: 2px 1px; height: 35px; flex: none; }
.info, .erf { flex: none; border-top: 2px solid #000; font-weight: normal; }
.info { height: 21px; text-align: center; }
.erf { height: 20px; background: var(--cream); padding-left: 2px; }
.viewer .closebar { height: 35px; padding: 1px 2px; gap: 4px; align-items: center; }
.viewer .close { height: 31px; flex: 1; border-width: 2px; }

.histo { left: 1241px; top: 448px; width: 467px; height: 570px; }
.hbody, .histo .closebar { --teal: #9adbdb; --tlite: #cff4f4; --tdark: #4f7f80; --trough: #80b8b8; }
.hbody { display: flex; padding: 4px 6px 0 4px; height: 294px; flex: none; }
.hleft { width: 103px; background: var(--panel); border: 1px solid #000; display: flex; flex-direction: column; margin-right: 2px; }
.radios { height: 138px; border-bottom: 2px solid #000; padding: 0 5px; border-top: 1px solid #000; border-right: 1px solid #000; }
.radios label { display: flex; height: 27px; align-items: center; gap: 5px; }
.radios input, .modes input { appearance: none; width: 10px; height: 10px; margin: 0 2px; transform: rotate(45deg); border: 2px solid; border-color: var(--lite) var(--dark) var(--dark) var(--lite); }
.radios input:checked, .modes input:checked { background: #cc0052; border-color: var(--dark) #eee #eee var(--dark); }
.hleft .list { padding: 2px 3px; margin-right: 4px; }
.hleft .acts { justify-content: flex-start; padding: 2px; gap: 5px; }
.hright { flex: 1; min-width: 0; background: var(--panel); border: 2px solid; border-color: #000 var(--dark) #000 #000; display: flex; flex-direction: column; }
.ctitle { align-self: center; margin-top: 2px; height: 22px; padding: 4px 3px 0; line-height: 16px; border: 1px solid #000; background: #b0ffff; box-shadow: 2px 2px 0 #778; font-style: italic; }
.bars { display: flex; height: 145px; flex: none; align-items: flex-end; padding: 0 12px 0 4px; border-bottom: 4px solid #000; font-weight: normal; }
.bars div { flex: 1; text-align: center; display: flex; flex-direction: column; }
.bars span { line-height: 14px; }
.bars .hot { color: #f01010; }
.bars i { border: 1px solid #000; border-width: 1px 0 0 1px; }
.bars div:last-child i { border-right-width: 1px; }
.r { background: var(--red); } .yl { background: var(--yellow); } .gr { background: var(--green); }
.axis { display: flex; margin: 1px 12px 0 4px; height: 29px; flex: none; font-weight: normal; }
.axis span { flex: 1; text-align: center; border: 1px solid #000; border-right-width: 0; line-height: 15px; padding-top: 1px; }
.axis span:last-child { border-right-width: 1px; }
.chartbar { margin: 7px 0 1px; }
.hbot { flex: 1; display: flex; min-height: 0; border: 1px solid #000; }
.hbot .list { flex: none; width: 73px; padding: 1px 2px; margin-right: 3px; }
.hbot li:last-child { margin-bottom: 0; }
.res { flex: 1; border-left: 1px solid #000; padding: 0 3px; display: flex; flex-direction: column; text-align: center; }
.res label { line-height: 20px; }
.res output { text-align: left; padding: 2px 0 1px 23px; font-weight: normal; }
.res input { appearance: none; width: 100%; height: 15px; background: #80b8b8; border: 2px solid; border-color: var(--dark) var(--lite) var(--lite) var(--dark); }
.res input::-webkit-slider-thumb { appearance: none; width: 29px; height: 11px; border: 1px solid; border-color: var(--lite) var(--dark) var(--dark) var(--lite); background: linear-gradient(90deg, var(--panel) 13px, var(--dark) 13px 14px, var(--panel) 14px); }
.sash { height: 7px; flex: none; border-bottom: 2px solid var(--tdark); border-top: 1px solid var(--tlite); display: flex; justify-content: flex-end; padding-right: 10px; }
.sash i { width: 9px; height: 8px; background: var(--teal); border: 2px solid; border-color: var(--tlite) var(--tdark) var(--tdark) var(--tlite); }
.map { height: 164px; flex: none; margin: 0 5px; border: 1px solid #000; outline: 1px solid var(--tdark); }
.map svg { display: block; width: 100%; height: 100%; }
.hfoot { display: flex; flex: 1; min-height: 0; padding: 2px 6px 4px; gap: 4px; }
.hfoot p { flex: 1; background: var(--panel); border: 1px solid #000; padding-left: 3px; line-height: 38px; margin-left: -2px; }
.hfoot .ic { height: 38px; align-self: center; }
.hfoot .sq { width: 38px; border-width: 2px; }
.hfoot .sq svg { width: 30px; height: 30px; }
.histo .closebar { height: 28px; }
.histo .close { flex: 1; height: 26px; border-width: 2px; margin: 0 2px; }

.measure { right: 8px; top: 245px; width: 184px; height: 252px; border: 1px solid #000; }
.measure .wtitle { height: 31px; padding-left: 7px; }
.measure h3 { height: 15px; line-height: 15px; text-align: center; background: var(--panel); flex: none; }
.modes { border-bottom: 2px solid #000; flex: none; }
.modes label { display: flex; align-items: center; gap: 5px; height: 29px; padding-left: 5px; background: var(--panel); border-top: 2px solid #000; white-space: nowrap; }
.mclose { margin-top: auto; height: 27px; border-top: 1px solid #000; padding: 1px 2px 2px; }
.mclose button { width: 100%; height: 23px; border-width: 2px; line-height: 18px; }
```
